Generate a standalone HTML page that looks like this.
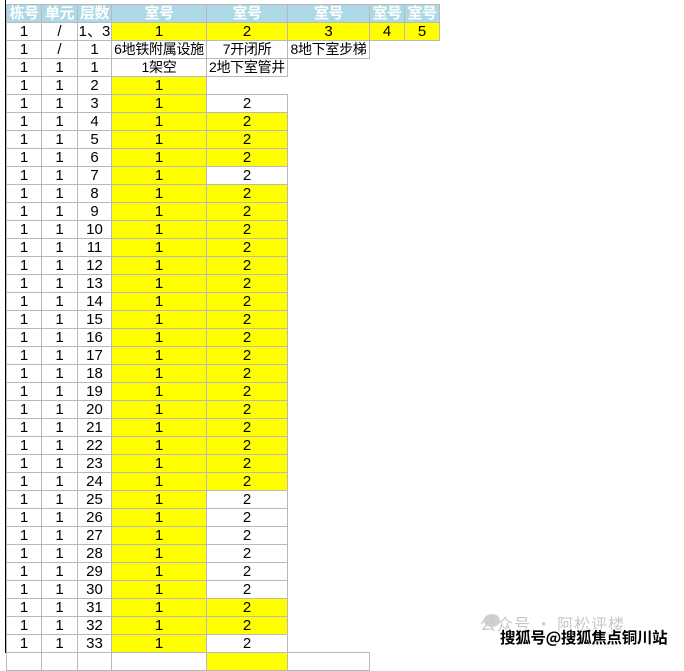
<!DOCTYPE html>
<html><head><meta charset="utf-8"><style>
body{margin:0;width:684px;height:653px;background:#fff;position:relative;overflow:hidden;font-family:"Liberation Sans","Noto Sans CJK SC",sans-serif}
.vl{position:absolute;left:5px;top:0;width:1px;height:653px;background:#000}
table{position:absolute;left:6px;top:4px;border-collapse:collapse;table-layout:fixed;width:434px}
td{height:17px;padding:0;border:1px solid #bdb8b8;text-align:center;font-size:15px;line-height:17px;color:#000;white-space:nowrap;overflow:hidden}
td.c{font-size:14px;letter-spacing:-0.3px}
tr.h td{background:#add8e6;color:#fff;font-weight:bold;font-size:15px;letter-spacing:-0.5px}
.y{background:#ff0}
td.n{border:none}
.wm1{position:absolute;left:480px;top:611px;color:#c8c8c8;font-size:16px;font-family:"Noto Sans CJK SC",sans-serif;letter-spacing:1px;white-space:nowrap}
.wm2{position:absolute;left:500px;top:626px;color:#000;font-size:15.5px;font-weight:bold;font-family:"Noto Sans CJK SC",sans-serif;white-space:nowrap;letter-spacing:-0.3px;text-shadow:1px 1px 0 #fff,-1px -1px 0 #fff,1px -1px 0 #fff,-1px 1px 0 #fff}
.ic{position:absolute;left:484px;top:614px;width:16px;height:13px;border-radius:50%;background:#d0d0d0}
</style></head><body>
<div class="vl"></div>
<table>
<colgroup><col style="width:35px"><col style="width:36px"><col style="width:34px"><col style="width:95px"><col style="width:81px"><col style="width:82px"><col style="width:35px"><col style="width:35px"></colgroup>
<tr class="h"><td>栋号</td><td>单元</td><td>层数</td><td>室号</td><td>室号</td><td>室号</td><td>室号</td><td>室号</td></tr>
<tr><td>1</td><td>/</td><td>1、3</td><td class="y">1</td><td class="y">2</td><td class="y">3</td><td class="y">4</td><td class="y">5</td></tr>
<tr><td>1</td><td>/</td><td>1</td><td class="c">6地铁附属设施</td><td class="c">7开闭所</td><td class="c">8地下室步梯</td><td class="n"></td><td class="n"></td></tr>
<tr><td>1</td><td>1</td><td>1</td><td class="c">1架空</td><td class="c">2地下室管井</td><td class="n"></td><td class="n"></td><td class="n"></td></tr>
<tr><td>1</td><td>1</td><td>2</td><td class="y">1</td><td class="n"></td><td class="n"></td><td class="n"></td><td class="n"></td></tr>
<tr><td>1</td><td>1</td><td>3</td><td class="y">1</td><td>2</td><td class="n"></td><td class="n"></td><td class="n"></td></tr>
<tr><td>1</td><td>1</td><td>4</td><td class="y">1</td><td class="y">2</td><td class="n"></td><td class="n"></td><td class="n"></td></tr>
<tr><td>1</td><td>1</td><td>5</td><td class="y">1</td><td class="y">2</td><td class="n"></td><td class="n"></td><td class="n"></td></tr>
<tr><td>1</td><td>1</td><td>6</td><td class="y">1</td><td class="y">2</td><td class="n"></td><td class="n"></td><td class="n"></td></tr>
<tr><td>1</td><td>1</td><td>7</td><td class="y">1</td><td>2</td><td class="n"></td><td class="n"></td><td class="n"></td></tr>
<tr><td>1</td><td>1</td><td>8</td><td class="y">1</td><td class="y">2</td><td class="n"></td><td class="n"></td><td class="n"></td></tr>
<tr><td>1</td><td>1</td><td>9</td><td class="y">1</td><td class="y">2</td><td class="n"></td><td class="n"></td><td class="n"></td></tr>
<tr><td>1</td><td>1</td><td>10</td><td class="y">1</td><td class="y">2</td><td class="n"></td><td class="n"></td><td class="n"></td></tr>
<tr><td>1</td><td>1</td><td>11</td><td class="y">1</td><td class="y">2</td><td class="n"></td><td class="n"></td><td class="n"></td></tr>
<tr><td>1</td><td>1</td><td>12</td><td class="y">1</td><td class="y">2</td><td class="n"></td><td class="n"></td><td class="n"></td></tr>
<tr><td>1</td><td>1</td><td>13</td><td class="y">1</td><td class="y">2</td><td class="n"></td><td class="n"></td><td class="n"></td></tr>
<tr><td>1</td><td>1</td><td>14</td><td class="y">1</td><td class="y">2</td><td class="n"></td><td class="n"></td><td class="n"></td></tr>
<tr><td>1</td><td>1</td><td>15</td><td class="y">1</td><td class="y">2</td><td class="n"></td><td class="n"></td><td class="n"></td></tr>
<tr><td>1</td><td>1</td><td>16</td><td class="y">1</td><td class="y">2</td><td class="n"></td><td class="n"></td><td class="n"></td></tr>
<tr><td>1</td><td>1</td><td>17</td><td class="y">1</td><td class="y">2</td><td class="n"></td><td class="n"></td><td class="n"></td></tr>
<tr><td>1</td><td>1</td><td>18</td><td class="y">1</td><td class="y">2</td><td class="n"></td><td class="n"></td><td class="n"></td></tr>
<tr><td>1</td><td>1</td><td>19</td><td class="y">1</td><td class="y">2</td><td class="n"></td><td class="n"></td><td class="n"></td></tr>
<tr><td>1</td><td>1</td><td>20</td><td class="y">1</td><td class="y">2</td><td class="n"></td><td class="n"></td><td class="n"></td></tr>
<tr><td>1</td><td>1</td><td>21</td><td class="y">1</td><td class="y">2</td><td class="n"></td><td class="n"></td><td class="n"></td></tr>
<tr><td>1</td><td>1</td><td>22</td><td class="y">1</td><td class="y">2</td><td class="n"></td><td class="n"></td><td class="n"></td></tr>
<tr><td>1</td><td>1</td><td>23</td><td class="y">1</td><td class="y">2</td><td class="n"></td><td class="n"></td><td class="n"></td></tr>
<tr><td>1</td><td>1</td><td>24</td><td class="y">1</td><td class="y">2</td><td class="n"></td><td class="n"></td><td class="n"></td></tr>
<tr><td>1</td><td>1</td><td>25</td><td class="y">1</td><td>2</td><td class="n"></td><td class="n"></td><td class="n"></td></tr>
<tr><td>1</td><td>1</td><td>26</td><td class="y">1</td><td>2</td><td class="n"></td><td class="n"></td><td class="n"></td></tr>
<tr><td>1</td><td>1</td><td>27</td><td class="y">1</td><td>2</td><td class="n"></td><td class="n"></td><td class="n"></td></tr>
<tr><td>1</td><td>1</td><td>28</td><td class="y">1</td><td>2</td><td class="n"></td><td class="n"></td><td class="n"></td></tr>
<tr><td>1</td><td>1</td><td>29</td><td class="y">1</td><td>2</td><td class="n"></td><td class="n"></td><td class="n"></td></tr>
<tr><td>1</td><td>1</td><td>30</td><td class="y">1</td><td>2</td><td class="n"></td><td class="n"></td><td class="n"></td></tr>
<tr><td>1</td><td>1</td><td>31</td><td class="y">1</td><td class="y">2</td><td class="n"></td><td class="n"></td><td class="n"></td></tr>
<tr><td>1</td><td>1</td><td>32</td><td class="y">1</td><td class="y">2</td><td class="n"></td><td class="n"></td><td class="n"></td></tr>
<tr><td>1</td><td>1</td><td>33</td><td class="y">1</td><td>2</td><td class="n"></td><td class="n"></td><td class="n"></td></tr>
<tr><td></td><td></td><td></td><td></td><td class="y"></td><td></td><td class="n"></td><td class="n"></td></tr>
</table>
<div class="ic"></div>
<div class="wm1">公众号 · 阿松评楼</div>
<div class="wm2">搜狐号@搜狐焦点铜川站</div>
</body></html>
